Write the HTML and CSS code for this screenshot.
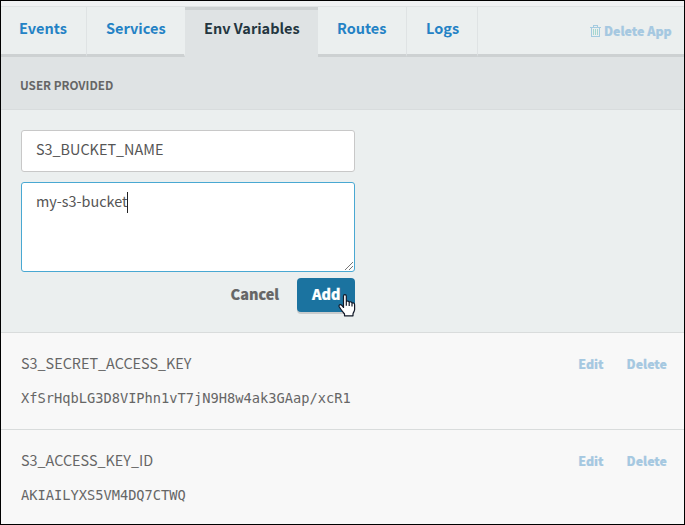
FILE: index.html
```html
<!DOCTYPE html>
<html lang="en">
<head>
<meta charset="utf-8">
<title>Env Variables</title>
<link rel="stylesheet" href="styles.css">
</head>
<body>
<div class="panel">
  <nav class="tabs">
    <a class="tab tab-events"><span>Events</span></a>
    <a class="tab tab-services"><span>Services</span></a>
    <a class="tab tab-env active"><span>Env Variables</span></a>
    <a class="tab tab-routes"><span>Routes</span></a>
    <a class="tab tab-logs"><span>Logs</span></a>
    <div class="tab-rest">
      <svg class="trash" width="11" height="12" viewBox="0 0 11 12" fill="none" stroke="#a4cbe0" shape-rendering="crispEdges">
        <path d="M0 2.5H11M3.5 2V.5H7.5V2M1.5 3V11.5H9.5V3"/>
        <path stroke="#a5d8d0" d="M3.5 4V10M5.5 4V10M7.5 4V10"/>
      </svg>
      <a class="delete-app">Delete App</a>
    </div>
  </nav>
  <header class="section-head"><span>USER PROVIDED</span></header>
  <form class="form">
    <div class="field name-field"><span>S3_BUCKET_NAME</span></div>
    <div class="field value-field"><span class="typed">my-s3-bucket</span><i class="caret"></i>
      <svg class="grip" width="8" height="8" viewBox="0 0 8 8" stroke="#777"><path d="M0 8L8 0M4 8L8 4"/></svg>
    </div>
    <div class="actions">
      <a class="cancel">Cancel</a>
      <div class="add"><span>Add</span>
        <svg class="pointer" width="18" height="23" viewBox="0 0 18 23"><path fill="#fff" stroke="#111827" stroke-width="1.2" stroke-linejoin="round" d="M5.5 14V2.2C5.5 .2 8.3 .2 8.3 2.2V7.8C8.8 6.6 11 6.8 11.2 8.3C12 7.3 13.8 7.7 14 9.2C15 8.5 16.6 9 16.6 10.7V15.5C16.6 17.5 15 18.5 15 20V21.8H6.5V20C5 18.2 3 15.8 1.2 12.7C.5 11 2.4 9.8 3.8 11.4L5.5 13.3M8.3 8V11.8M11.2 8.7V12M14 9.6V12.4"/></svg>
      </div>
    </div>
  </form>
  <section class="row">
    <div class="row-top"><span class="key">S3_SECRET_ACCESS_KEY</span><a class="edit">Edit</a><a class="delete">Delete</a></div>
    <div class="value">XfSrHqbLG3D8VIPhn1vT7jN9H8w4ak3GAap/xcR1</div>
  </section>
  <section class="row">
    <div class="row-top"><span class="key">S3_ACCESS_KEY_ID</span><a class="edit">Edit</a><a class="delete">Delete</a></div>
    <div class="value">AKIAILYXS5VM4DQ7CTWQ</div>
  </section>
</div>
</body>
</html>
```
FILE: styles.css
```css
* { box-sizing: border-box; }
body {
  margin: 0;
  font-family: "Noto Sans CJK SC", "Noto Sans", sans-serif;
  color: #666;
  white-space: nowrap;
}
.panel {
  width: 685px;
  height: 525px;
  border: 1px solid #000;
  padding-top: 5px;
  background: #f0f2f3;
  overflow: hidden;
}
.tabs {
  display: flex;
  height: 51px;
  border-top: 1px solid #dfe3e4;
  background: #ebefef;
}
.tab {
  height: 50px;
  padding: 9px 0 0 19px;
  border-right: 1px solid #dfe3e4;
  border-bottom: 3px solid #cdd1d2;
  font-size: 14.5px;
  line-height: 24px;
  font-weight: 700;
  color: #2482c5;
}
.tab-events { width: 86px; padding-left: 18px; }
.tab-services { width: 98px; border-right-color: #ebefef; }
.tab-env { width: 133px; }
.tab-routes { width: 89px; }
.tab-logs { width: 71px; }
.tab.active {
  padding-top: 6px;
  border-top: 3px solid #cdd1d2;
  border-right: 0;
  border-bottom: 0;
  background: #dfe3e4;
  color: #243640;
}
.tab-rest {
  flex: 1;
  display: flex;
  justify-content: flex-end;
  padding: 14px 12px 0 0;
  border-bottom: 3px solid #cdd1d2;
}
.trash { margin: 4px 3px 0 0; }
.delete-app, .edit, .delete {
  font-size: 12.4px;
  line-height: 20px;
  font-weight: 900;
  color: #a5c8e1;
  -webkit-text-stroke: .2px #a5c8e1;
}
.delete-app { width: 68px; }
.section-head {
  height: 53px;
  padding: 18px 0 0 19px;
  background: #dfe3e4;
  border-bottom: 1px solid #d8dcdd;
  font-size: 11.7px;
  line-height: 20px;
  font-weight: 700;
}
.form {
  height: 223px;
  padding: 20px;
  background: #ebefef;
  border-bottom: 1px solid #d9dcdc;
}
.field {
  width: 334px;
  padding: 6px 0 0 14px;
  border: 1px solid #c8c8c8;
  border-radius: 3px;
  background: #fff;
  font-size: 14.4px;
  line-height: 24px;
  color: #555;
}
.name-field { height: 42px; }
.value-field {
  position: relative;
  display: flex;
  height: 90px;
  margin-top: 10px;
  border-color: #49a8d2;
}
.caret { width: 1px; height: 21px; margin-top: 3px; background: #222; }
.grip { position: absolute; right: 1px; bottom: 1px; }
.actions {
  display: flex;
  justify-content: flex-end;
  width: 334px;
  padding-top: 6px;
  font-size: 14.4px;
  line-height: 24px;
  font-weight: 900;
}
.cancel { padding-top: 4px; margin-right: 18px; -webkit-text-stroke: .15px #666; }
.add {
  position: relative;
  width: 58px;
  height: 34px;
  padding: 4px 0 0 15px;
  border-radius: 4px;
  background: #1b73a0;
  box-shadow: 0 2px 0 #c8cbcc;
  color: #fff;
}
.add span { -webkit-text-stroke: .2px #fff; }
.pointer { position: absolute; left: 41px; top: 16px; }
.row {
  height: 97px;
  padding: 18px 17px 0 20px;
  border-bottom: 1px solid #d9dcdc;
  background: #f8f8f8;
}
.row-top { display: flex; height: 26px; }
.key { flex: 1; font-size: 14.4px; line-height: 23px; }
.edit, .delete { line-height: 26px; }
.edit { margin-right: 23px; }
.value {
  margin-top: 10px;
  font-family: "DejaVu Sans Mono", monospace;
  font-size: 13.7px;
  line-height: 22px;
}
```
